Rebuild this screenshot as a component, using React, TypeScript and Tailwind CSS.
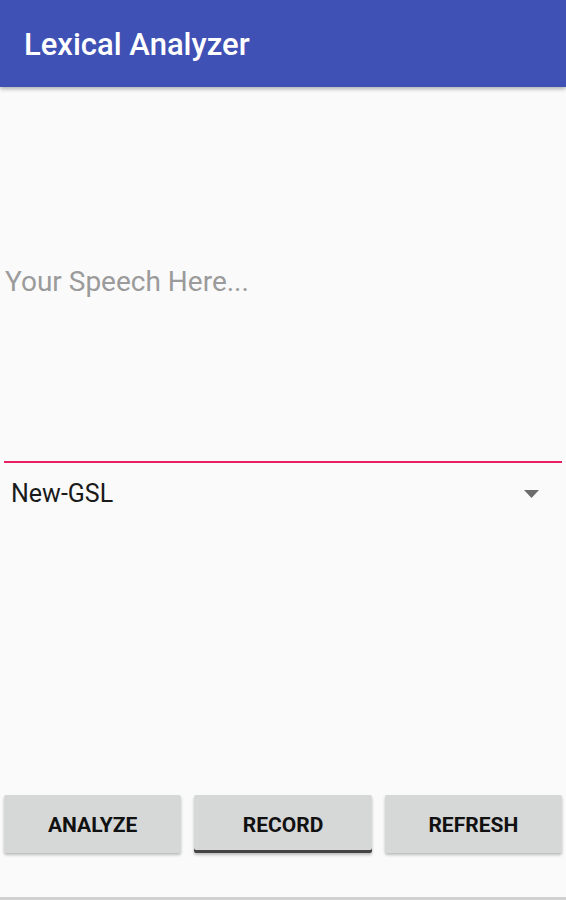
export default function App() {
  return (
    <div
      className="flex h-[900px] w-[566px] flex-col bg-[#fafafa]"
      style={{ fontFamily: "Roboto, 'Liberation Sans', sans-serif" }}
    >
      <header className="z-10 flex h-[87px] shrink-0 items-center bg-[#3f51b5] pl-[24px] pt-[3px] shadow-[0_2px_4px_rgba(0,0,0,0.3)]">
        <h1 className="text-[31px] font-medium text-white">Lexical Analyzer</h1>
      </header>

      <div className="mx-[4px] flex h-[376px] items-center border-b-2 border-[#e91e63] pt-[16px]">
        <span className="pl-[1px] text-[28px] text-[#9b9b9b]">Your Speech Here...</span>
      </div>

      <div className="flex h-[62px] items-center justify-between pl-[11px] pr-[27px]">
        <span className="text-[25px] text-[#1a1a1a]">New-GSL</span>
        <svg width="15" height="8" viewBox="0 0 15 8">
          <path d="M0 0h15L7.5 8z" fill="#6b6b6b" />
        </svg>
      </div>

      <div className="flex-1" />

      <div className="flex gap-[13px] px-[4px]">
        {["ANALYZE", "RECORD", "REFRESH"].map((label) => (
          <button
            key={label}
            className={`flex h-[58px] flex-1 items-center justify-center rounded-[2px] bg-[#d6d7d7] pt-[3px] text-[21px] font-bold text-[#111] ${
              label === "RECORD"
                ? "shadow-[inset_0_-3px_0_#444,0_2px_3px_rgba(0,0,0,0.25)]"
                : "shadow-[0_2px_3px_rgba(0,0,0,0.25)]"
            }`}
          >
            {label}
          </button>
        ))}
      </div>

      <div className="h-[47px] border-b-[3px] border-[#d0d0d0]" />
    </div>
  );
}
